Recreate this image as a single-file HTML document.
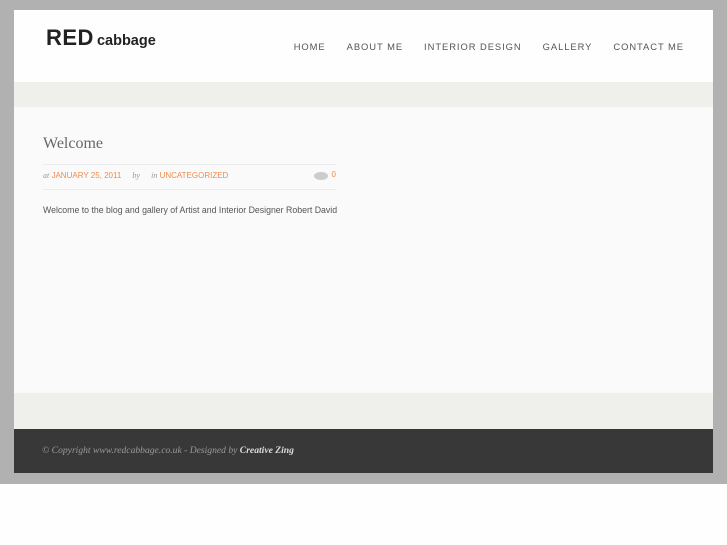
<!DOCTYPE html>
<html><head><style>
*{margin:0;padding:0}
body{width:727px;height:545px;background:#fefefe;position:relative;overflow:hidden;font-family:"Liberation Sans",sans-serif}
#bg{position:absolute;left:0;top:0;width:727px;height:484px;background:#b1b1b1}
#wrap{position:absolute;left:14px;top:10px;width:699px;height:463px}
#hd{position:absolute;left:0;top:0;width:699px;height:72px;background:#fefefe}
#logo{position:absolute;left:32px;top:15px;color:#222;font-weight:bold;white-space:nowrap}
#logo b{font-size:22px;letter-spacing:0.5px}
#logo span{font-size:14.5px;margin-left:3px}
#nav{position:absolute;top:31px;right:29px;font-size:9.4px;color:#555;letter-spacing:0.95px;white-space:nowrap}
#nav span{margin-left:21px}
#b1{position:absolute;top:72px;left:0;width:699px;height:25px;background:#efefeb}
#ct{position:absolute;top:97px;left:0;width:699px;height:286px;background:#fafafa}
h1{position:absolute;left:29px;top:28px;font:normal 16px "Liberation Serif",serif;color:#666}
.ln{position:absolute;left:29px;width:293px;border-top:1px solid #ebebeb}
#meta{position:absolute;left:29px;top:64px;width:293px;font-size:8px;color:#999;white-space:nowrap}
#meta i{font-family:"Liberation Serif",serif}
#meta .o{color:#f08a4b}
#txt{position:absolute;left:29px;top:98px;font-size:8.75px;color:#555;white-space:nowrap}
#b2{position:absolute;top:383px;left:0;width:699px;height:36px;background:#efefeb}
#ft{position:absolute;top:419px;left:0;width:699px;height:44px;background:#383838;color:#999;font:italic 9.6px "Liberation Serif",serif}
#ft span{position:absolute;left:28px;top:16px;white-space:nowrap}
#ft b{color:#ddd}
</style></head><body>
<div id="bg"></div>
<div id="wrap">
<div id="hd"><div id="logo"><b>RED</b><span>cabbage</span></div>
<div id="nav"><span>HOME</span><span>ABOUT ME</span><span>INTERIOR DESIGN</span><span>GALLERY</span><span>CONTACT ME</span></div></div>
<div id="b1"></div>
<div id="ct"><h1>Welcome</h1>
<div class="ln" style="top:57px"></div>
<div id="meta"><i>at</i> <span class="o">JANUARY 25, 2011</span> &nbsp;&nbsp;&nbsp; <i>by</i> &nbsp;&nbsp;&nbsp; <i>in</i> <span class="o">UNCATEGORIZED</span>
<span style="position:absolute;right:8px;top:1px;width:14px;height:8px;border-radius:50%;background:#ccc"></span><span class="o" style="position:absolute;right:0;top:-1px">0</span></div>
<div class="ln" style="top:82px"></div>
<div id="txt">Welcome to the blog and gallery of Artist and Interior Designer Robert David</div>
</div>
<div id="b2"></div>
<div id="ft"><span>© Copyright www.redcabbage.co.uk - Designed by <b>Creative Zing</b></span></div>
</div>
</body></html>
